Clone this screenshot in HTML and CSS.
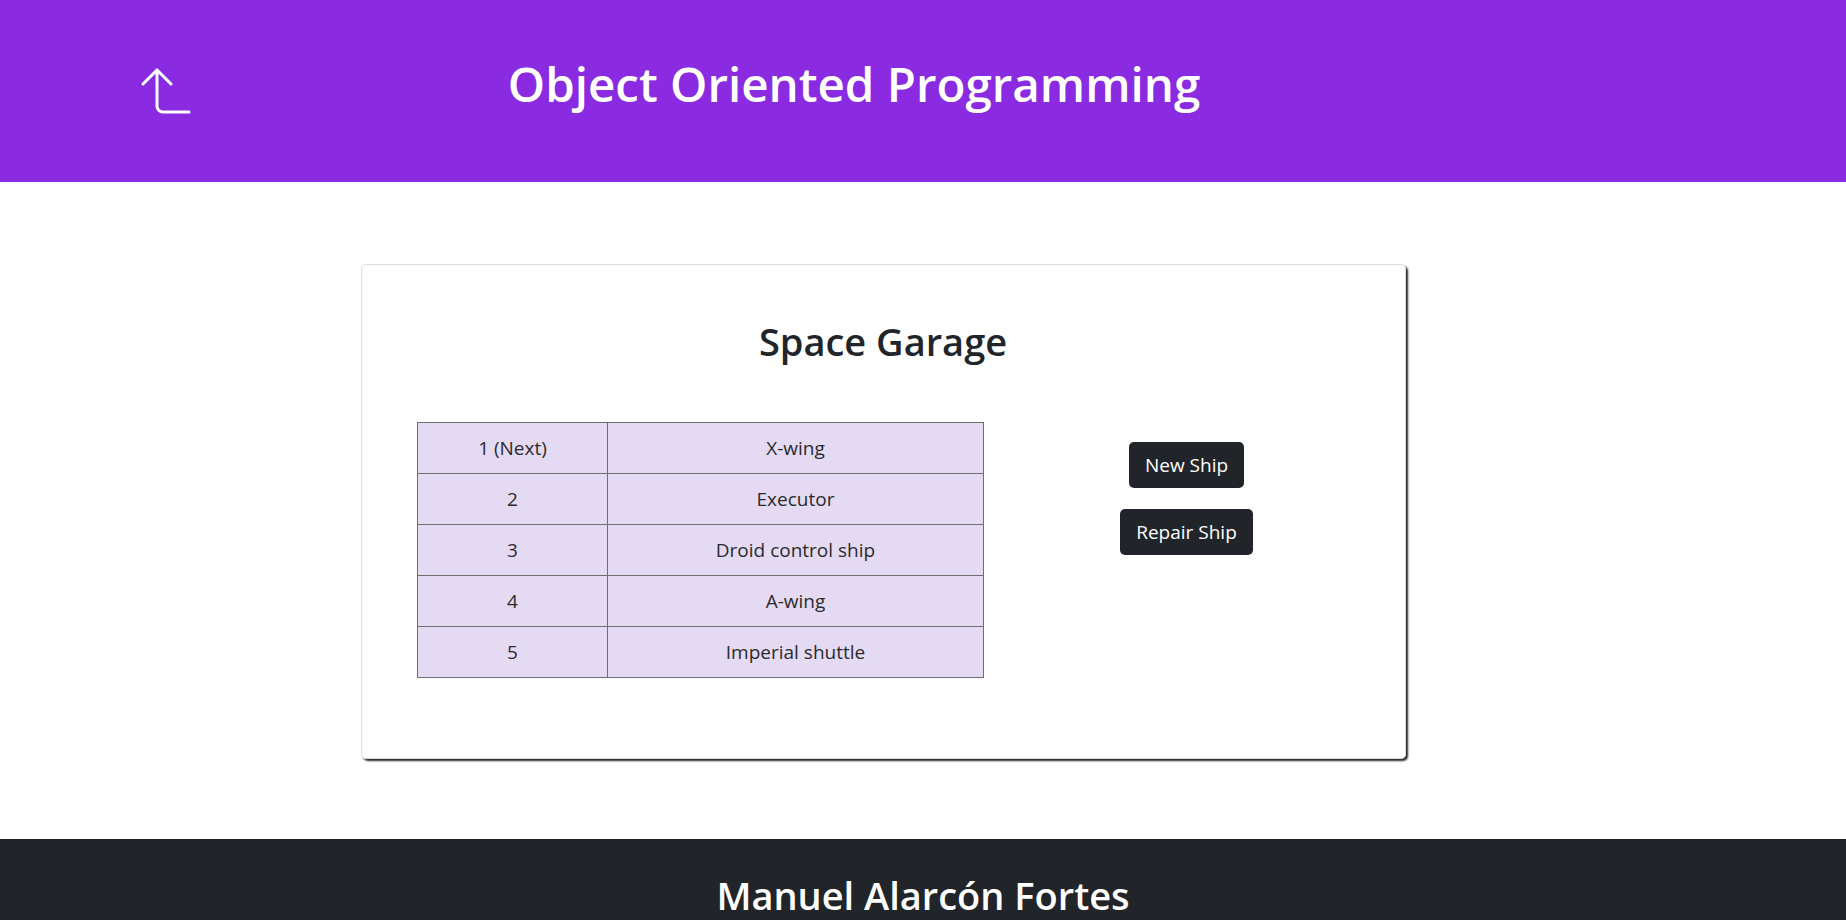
FILE: index.html
```html
<!DOCTYPE html>
<html lang="en">
<head>
<meta charset="utf-8">
<title>Object Oriented Programming</title>
<link rel="stylesheet" href="styles.css">
</head>
<body>
<header class="topbar">
  <div class="back">
    <svg width="52" height="50" viewBox="0 0 52 50" fill="none" stroke="#fff" stroke-width="3" stroke-linecap="round" stroke-linejoin="round">
      <polyline points="3,18 17,4 31,18"/>
      <path d="M17 4 V40 A6 6 0 0 0 23 46 H49"/>
    </svg>
  </div>
  <h1 class="title">Object Oriented Programming</h1>
</header>
<main class="main">
  <section class="card">
    <h2 class="card-title">Space Garage</h2>
    <div class="card-body">
      <table class="ships">
        <tr><td class="num">1 (Next)</td><td>X-wing</td></tr>
        <tr><td class="num">2</td><td>Executor</td></tr>
        <tr><td class="num">3</td><td>Droid control ship</td></tr>
        <tr><td class="num">4</td><td>A-wing</td></tr>
        <tr><td class="num">5</td><td>Imperial shuttle</td></tr>
      </table>
      <div class="actions">
        <button class="btn">New Ship</button>
        <button class="btn">Repair Ship</button>
      </div>
    </div>
  </section>
</main>
<footer class="footer">
  <h2 class="author">Manuel Alarcón Fortes</h2>
</footer>
</body>
</html>
```

FILE: styles.css
```css
* { box-sizing: border-box; }
html, body { margin: 0; padding: 0; }
body {
  font-family: "Open Sans", "Noto Sans", sans-serif;
  color: #212529;
  background: #fff;
}
.topbar {
  height: 182px;
  background: #8a2be2;
  display: grid;
  grid-template-columns: 308px 1092px;
  align-items: center;
}
.back {
  padding-left: 140px;
  display: flex;
  align-items: center;
}
.back svg { display: block; }
.title {
  margin: 0;
  padding-bottom: 14px;
  text-align: center;
  color: #fff;
  font-size: 47.5px;
  font-weight: 600;
  line-height: 60px;
}
.main {
  padding: 82px 0 80px 361px;
}
.card {
  width: 1045px;
  height: 495px;
  border: 1px solid #dcdcdc;
  border-radius: 5px;
  box-shadow: 2px 2px 2px rgba(0,0,0,0.85);
  padding: 52px 56px 0 55px;
}
.card-title {
  margin: 0;
  text-align: center;
  font-size: 38px;
  font-weight: 600;
  line-height: 48px;
}
.card-body {
  margin-top: 57px;
  display: flex;
  align-items: flex-start;
}
.ships {
  width: 567px;
  border-collapse: collapse;
  background: #e4daf3;
  font-size: 19px;
}
.ships td {
  border: 1px solid #6e6e6e;
  height: 51px;
  padding: 0 8px;
  text-align: center;
  color: #2b2b2b;
}
.ships td.num { width: 190px; }
.actions {
  flex: 1;
  padding-left: 40px;
  padding-top: 20px;
  display: flex;
  flex-direction: column;
  align-items: center;
  gap: 21px;
}
.btn {
  font-family: inherit;
  font-size: 19px;
  line-height: 30px;
  padding: 8px 16px;
  border: none;
  border-radius: 5px;
  background: #212529;
  color: #fff;
}
.footer {
  background: #212529;
  height: 140px;
  padding-top: 32px;
}
.author {
  margin: 0;
  text-align: center;
  color: #fff;
  font-size: 38px;
  font-weight: 600;
  line-height: 48px;
}
```
